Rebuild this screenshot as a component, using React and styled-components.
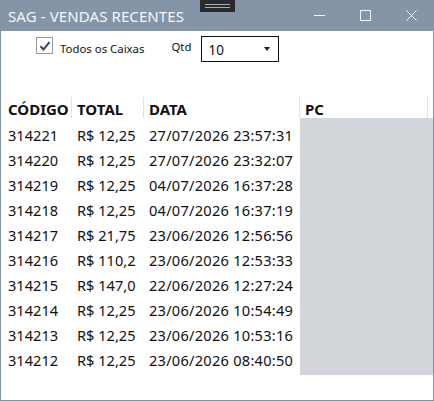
import React from "react";
import styled, { createGlobalStyle } from "styled-components";

// Sales rows shown in the grid
const vendas = [
  ["314221", "R$ 12,25", "27/07/2026 23:57:31"],
  ["314220", "R$ 12,25", "27/07/2026 23:32:07"],
  ["314219", "R$ 12,25", "04/07/2026 16:37:28"],
  ["314218", "R$ 12,25", "04/07/2026 16:37:19"],
  ["314217", "R$ 21,75", "23/06/2026 12:56:56"],
  ["314216", "R$ 110,2", "23/06/2026 12:53:33"],
  ["314215", "R$ 147,0", "22/06/2026 12:27:24"],
  ["314214", "R$ 12,25", "23/06/2026 10:54:49"],
  ["314213", "R$ 12,25", "23/06/2026 10:53:16"],
  ["314212", "R$ 12,25", "23/06/2026 08:40:50"],
];

const App = () => {
  return (
    <>
      <GlobalStyle />
      <Window>
        <TitleBar>
          <Title>SAG - VENDAS RECENTES</Title>
          <SnapHandle>
            <span />
            <span />
          </SnapHandle>
          <Controls>
            <ControlButton>
              <svg width="11" height="11" viewBox="0 0 11 11">
                <path d="M0 5.5h11" stroke="currentColor" strokeWidth="1" />
              </svg>
            </ControlButton>
            <ControlButton>
              <svg width="11" height="11" viewBox="0 0 11 11">
                <rect x="0.5" y="0.5" width="10" height="10" fill="none" stroke="currentColor" strokeWidth="1" />
              </svg>
            </ControlButton>
            <ControlButton>
              <svg width="11" height="11" viewBox="0 0 11 11">
                <path d="M0.5 0.5l10 10M10.5 0.5l-10 10" stroke="currentColor" strokeWidth="1" />
              </svg>
            </ControlButton>
          </Controls>
        </TitleBar>

        <Toolbar>
          <CheckWrap>
            <CheckBox>
              <svg width="14" height="14" viewBox="0 0 14 14">
                <path d="M2.5 7.2l3 3.2 6-7.2" fill="none" stroke="#2c4a6a" strokeWidth="2" />
              </svg>
            </CheckBox>
            <CheckLabel>Todos os Caixas</CheckLabel>
          </CheckWrap>
          <QtdLabel>Qtd</QtdLabel>
          <Combo>
            <span>10</span>
            <Arrow />
          </Combo>
        </Toolbar>

        <Grid>
          <HeaderRow>
            <HeaderCell>CÓDIGO</HeaderCell>
            <HeaderCell>TOTAL</HeaderCell>
            <HeaderCell>DATA</HeaderCell>
            <HeaderCell>PC</HeaderCell>
            <HeaderCell $filler />
          </HeaderRow>
          <Body>
            {vendas.map((venda, i) => (
              <Row key={i}>
                <Cell>{venda[0]}</Cell>
                <Cell>{venda[1]}</Cell>
                <Cell $date>{venda[2]}</Cell>
              </Row>
            ))}
          </Body>
        </Grid>
      </Window>
    </>
  );
};

const GlobalStyle = createGlobalStyle`
  body {
    margin: 0;
    overflow: hidden;
    background: #ffffff;
  }
  * {
    box-sizing: border-box;
  }
`;

const Window = styled.div`
  width: 434px;
  height: 401px;
  display: flex;
  flex-direction: column;
  border: 1px solid #8192a4;
  border-top: none;
  background: #ffffff;
  font-family: "Noto Sans", "Open Sans", sans-serif;
  color: #111111;
`;

const TitleBar = styled.div`
  position: relative;
  height: 31px;
  margin: 0 -1px;
  display: flex;
  align-items: center;
  background: #8495a7;
  color: #f3f5f8;
`;

const Title = styled.div`
  padding-left: 8px;
  font-size: 15px;
  letter-spacing: 0.1px;
`;

const SnapHandle = styled.div`
  position: absolute;
  left: 200px;
  top: 0;
  width: 35px;
  height: 12px;
  background: #2a2b2d;
  display: flex;
  flex-direction: column;
  justify-content: center;
  gap: 2px;
  padding: 0 5px;

  span {
    display: block;
    height: 1px;
    background: #a9acb0;
  }
`;

const Controls = styled.div`
  margin-left: auto;
  display: flex;
  height: 100%;
`;

const ControlButton = styled.div`
  width: 46px;
  height: 100%;
  display: flex;
  align-items: center;
  justify-content: center;
  color: #f3f5f8;
`;

const Toolbar = styled.div`
  display: flex;
  align-items: flex-start;
  padding: 5px 0 0 35px;
  height: 66px;
`;

const CheckWrap = styled.div`
  display: flex;
  align-items: flex-start;
  margin-top: 1px;
`;

const CheckBox = styled.div`
  width: 17px;
  height: 17px;
  border: 1px solid #9a9a9a;
  display: flex;
  align-items: center;
  justify-content: center;
  background: #ffffff;
`;

const CheckLabel = styled.span`
  margin-left: 7px;
  margin-top: 3px;
  font-size: 11.4px;
  line-height: 17px;
`;

const QtdLabel = styled.span`
  margin-left: 27px;
  margin-top: 2px;
  font-size: 11.4px;
  line-height: 17px;
`;

const Combo = styled.div`
  margin-left: 10px;
  width: 78px;
  height: 26px;
  border: 1px solid #111111;
  display: flex;
  align-items: center;
  justify-content: space-between;
  padding: 2px 8px 0 6px;
  font-size: 13.5px;
`;

const Arrow = styled.span`
  width: 0;
  height: 0;
  margin-top: -2px;
  border-left: 3.5px solid transparent;
  border-right: 3.5px solid transparent;
  border-top: 4px solid #222222;
`;

const Grid = styled.div`
  display: flex;
  flex-direction: column;
`;

const columns = "71px 72px 156px 128px 1fr";

const HeaderRow = styled.div`
  display: grid;
  grid-template-columns: ${columns};
  height: 21px;
`;

const HeaderCell = styled.div`
  padding: 3px 0 0 5px;
  font-weight: 700;
  font-size: 15px;
  line-height: 18px;
  border-right: ${(p) => (p.$filler ? "none" : "1px solid #e2e2e2")};

  &:first-child {
    padding-left: 7px;
  }
`;

// PC column stays empty; its area is the grey band on the right
const Body = styled.div`
  padding: 5px 0 2px;
  background: linear-gradient(to right, transparent 299px, #d2d5d9 299px);
`;

const Row = styled.div`
  display: grid;
  grid-template-columns: ${columns};
  height: 25px;
`;

const Cell = styled.div`
  padding-left: 5px;
  font-size: 14.6px;
  line-height: 25px;
  white-space: nowrap;
  overflow: hidden;
  letter-spacing: ${(p) => (p.$date ? "0.25px" : "0")};

  &:first-child {
    padding-left: 7px;
  }
`;

export default App;
